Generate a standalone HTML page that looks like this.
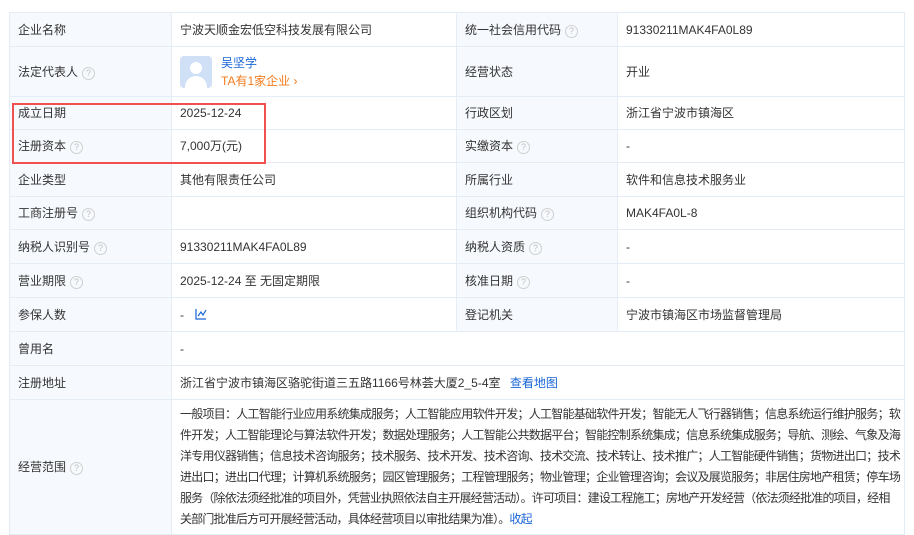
<!DOCTYPE html><html><head><meta charset="utf-8"><style>
body{margin:0;background:#fff;font-family:"Liberation Sans","Noto Sans CJK SC",sans-serif;font-size:12px;color:#333;width:914px;height:525px;overflow:hidden;position:relative}
table{position:absolute;left:9px;top:12px;border-collapse:collapse;width:896px;table-layout:fixed}
td{border:1px solid #e4ecf6;padding:0 8px;vertical-align:middle;line-height:18px}
td.l{background:#f6f9fd}
.q{display:inline-block;width:11px;height:11px;border:1px solid #d0d0d0;border-radius:50%;color:#c0c0c0;font-size:9px;line-height:11px;text-align:center;margin-left:4px;vertical-align:0}
.scope{line-height:21px;padding:4px 4px 4px 8px;letter-spacing:-0.82px;text-align:justify}
a{color:#1a66d8;text-decoration:none}
.red{position:absolute;left:12px;top:103px;width:250px;height:57px;border:2px solid #f05050}
</style></head><body>
<table>
<colgroup><col style="width:162px"><col style="width:285px"><col style="width:161px"><col></colgroup>
<tr style="height:34px"><td class="l">企业名称</td><td>宁波天顺金宏低空科技发展有限公司</td><td class="l">统一社会信用代码<span class="q">?</span></td><td>91330211MAK4FA0L89</td></tr>
<tr style="height:50px"><td class="l">法定代表人<span class="q">?</span></td><td><div style="display:flex;align-items:center"><div style="width:32px;height:32px;background:#cfe0f7;border-radius:4px;margin-right:9px;position:relative;overflow:hidden"><div style="position:absolute;left:10px;top:6px;width:12px;height:12px;border-radius:50%;background:#fff"></div><div style="position:absolute;left:5px;top:20px;width:22px;height:16px;border-radius:11px 11px 0 0;background:#fff"></div></div><div><div style="color:#1a66d8">吴坚学</div><div style="color:#f37b1d">TA有1家企业 ›</div></div></div></td><td class="l">经营状态</td><td>开业</td></tr>
<tr style="height:33px"><td class="l">成立日期</td><td>2025-12-24</td><td class="l">行政区划</td><td>浙江省宁波市镇海区</td></tr>
<tr style="height:33px"><td class="l">注册资本<span class="q">?</span></td><td>7,000万(元)</td><td class="l">实缴资本<span class="q">?</span></td><td>-</td></tr>
<tr style="height:34px"><td class="l">企业类型</td><td>其他有限责任公司</td><td class="l">所属行业</td><td>软件和信息技术服务业</td></tr>
<tr style="height:33px"><td class="l">工商注册号<span class="q">?</span></td><td></td><td class="l">组织机构代码<span class="q">?</span></td><td>MAK4FA0L-8</td></tr>
<tr style="height:34px"><td class="l">纳税人识别号<span class="q">?</span></td><td>91330211MAK4FA0L89</td><td class="l">纳税人资质<span class="q">?</span></td><td>-</td></tr>
<tr style="height:34px"><td class="l">营业期限<span class="q">?</span></td><td>2025-12-24 至 无固定期限</td><td class="l">核准日期<span class="q">?</span></td><td>-</td></tr>
<tr style="height:34px"><td class="l">参保人数</td><td>- <svg width="12" height="12" viewBox="0 0 12 12" style="margin-left:8px;vertical-align:-1px"><path d="M1 1V11H11M3 8L6 4L8 7L11 2" fill="none" stroke="#1a66d8" stroke-width="1.2"/></svg></td><td class="l">登记机关</td><td>宁波市镇海区市场监督管理局</td></tr>
<tr style="height:34px"><td class="l">曾用名</td><td colspan="3">-</td></tr>
<tr style="height:34px"><td class="l">注册地址</td><td colspan="3">浙江省宁波市镇海区骆驼街道三五路1166号林荟大厦2_5-4室 <a style="margin-left:6px">查看地图</a></td></tr>
<tr><td class="l">经营范围<span class="q">?</span></td><td colspan="3" class="scope">一般项目：人工智能行业应用系统集成服务；人工智能应用软件开发；人工智能基础软件开发；智能无人飞行器销售；信息系统运行维护服务；软件开发；人工智能理论与算法软件开发；数据处理服务；人工智能公共数据平台；智能控制系统集成；信息系统集成服务；导航、测绘、气象及海洋专用仪器销售；信息技术咨询服务；技术服务、技术开发、技术咨询、技术交流、技术转让、技术推广；人工智能硬件销售；货物进出口；技术进出口；进出口代理；计算机系统服务；园区管理服务；工程管理服务；物业管理；企业管理咨询；会议及展览服务；非居住房地产租赁；停车场服务（除依法须经批准的项目外，凭营业执照依法自主开展经营活动）。许可项目：建设工程施工；房地产开发经营（依法须经批准的项目，经相<br>关部门批准后方可开展经营活动，具体经营项目以审批结果为准）。<a>收起</a></td></tr>
</table>
<div class="red"></div>
</body></html>
